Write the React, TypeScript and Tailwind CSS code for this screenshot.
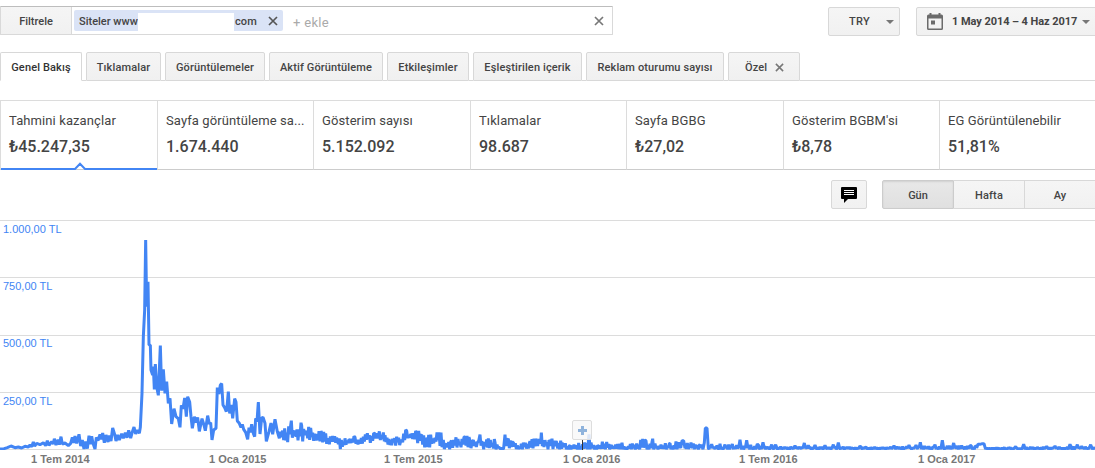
import React from 'react';

const tabs = [
  { label: 'Genel Bakış', width: 'w-[82px]', active: true },
  { label: 'Tıklamalar', width: 'w-[75px]' },
  { label: 'Görüntülemeler', width: 'w-[100px]' },
  { label: 'Aktif Görüntüleme', width: 'w-[114px]' },
  { label: 'Etkileşimler', width: 'w-[82px]' },
  { label: 'Eşleştirilen içerik', width: 'w-[109px]' },
  { label: 'Reklam oturumu sayısı', width: 'w-[138px]' },
];

const metrics = [
  { label: 'Tahmini kazançlar', value: '₺45.247,35', width: 'w-[157px]' },
  { label: 'Sayfa görüntüleme sa...', value: '1.674.440', width: 'w-[156px]' },
  { label: 'Gösterim sayısı', value: '5.152.092', width: 'w-[157px]' },
  { label: 'Tıklamalar', value: '98.687', width: 'w-[156px]' },
  { label: 'Sayfa BGBG', value: '₺27,02', width: 'w-[157px]' },
  { label: "Gösterim BGBM'si", value: '₺8,78', width: 'w-[156px]' },
  { label: 'EG Görüntülenebilir', value: '51,81%', width: 'w-[156px]' },
];

type Pt = [number, number];
type Band = [number, number, number];

// Chart units are thirds of a pixel; the zero line is at 687.
const opening: Pt[] = [
  [0, 687], [12, 686], [22, 683], [33, 678], [45, 683], [55, 681], [65, 684], [75, 679], [85, 681], [90, 675],
  [95, 680], [100, 666], [104, 678], [110, 670], [120, 674], [130, 668], [137, 677], [142, 662], [147, 676],
  [155, 665], [160, 672], [163, 656], [168, 675], [174, 659], [178, 674], [183, 650], [187, 672], [195, 669],
  [205, 677], [212, 670], [217, 652], [221, 669], [225, 648], [230, 670], [237, 643], [242, 678], [247, 660],
  [252, 687], [257, 665], [262, 686], [267, 647], [271, 673], [275, 649], [279, 670], [285, 687], [289, 652],
  [294, 662], [300, 643], [304, 658], [308, 639], [313, 668], [318, 645], [324, 666], [328, 647], [333, 663],
  [338, 624], [344, 643], [348, 663], [353, 645], [358, 660], [365, 641], [370, 655], [376, 638], [381, 653],
  [386, 631], [392, 654], [396, 639], [402, 621], [407, 642], [412, 630], [418, 640], [421, 622],
  [426, 520], [430, 350], [434, 270], [437, 60], [440, 260], [444, 185], [447, 375], [451, 375], [453, 450],
  [458, 465], [460, 440], [463, 508], [466, 432], [470, 500], [475, 526], [481, 377], [485, 512], [490, 448],
  [495, 520], [500, 485], [505, 550], [510, 535], [515, 612], [522, 566], [528, 590], [535, 596], [540, 622],
  [544, 556], [549, 566], [554, 534], [559, 590], [563, 530], [569, 546], [573, 590], [577, 625], [583, 590],
  [588, 608], [593, 592], [598, 634], [606, 596], [611, 612], [616, 632], [623, 587], [628, 612], [632, 608],
  [636, 660], [641, 630], [648, 625], [652, 503], [657, 522], [661, 495], [665, 491], [669, 555], [674, 563],
  [679, 575], [682, 550], [685, 515], [689, 580], [694, 555], [698, 595], [704, 536], [708, 546], [712, 603],
  [718, 610], [723, 622], [727, 613], [731, 628], [737, 637], [743, 658], [747, 623], [751, 637], [755, 613],
  [760, 640], [764, 650], [767, 595], [771, 605], [775, 546], [780, 642], [785, 594], [789, 592], [795, 610],
  [799, 664], [807, 635], [813, 609], [818, 643], [825, 598], [832, 635], [838, 655],
];

const bands: Band[] = [
  [840, 635, 655], [848, 632, 650], [860, 638, 673], [874, 602, 645], [879, 632, 650], [885, 632, 652],
  [905, 617, 652], [920, 634, 652],
  [932, 624, 652], [945, 641, 656], [965, 638, 661], [985, 655, 670], [998, 648, 668], [1012, 658, 668],
  [1024, 660, 687], [1035, 655, 670], [1050, 660, 668], [1065, 652, 668], [1078, 660, 670], [1090, 650, 670],
  [1102, 640, 660], [1115, 648, 663], [1125, 641, 658], [1138, 634, 660], [1155, 646, 665], [1172, 660, 671],
  [1190, 650, 670], [1205, 660, 671], [1220, 632, 655], [1235, 646, 660], [1250, 638, 660], [1265, 644, 666],
  [1280, 658, 680], [1292, 644, 675], [1305, 654, 668], [1317, 637, 668], [1330, 660, 680], [1340, 671, 688],
  [1355, 663, 683], [1368, 652, 679], [1380, 666, 680], [1395, 651, 679], [1410, 662, 680], [1420, 660, 678],
  [1436, 663, 678], [1440, 644, 676], [1445, 667, 681], [1448, 667, 683], [1465, 655, 680], [1485, 667, 684],
  [1500, 685, 687], [1511, 684, 687],
  [1515, 644, 683], [1525, 656, 680], [1540, 667, 680], [1558, 683, 687], [1570, 668, 684], [1590, 664, 680],
  [1610, 661, 678], [1619, 659, 677], [1624, 638, 675], [1629, 661, 679], [1650, 664, 682], [1670, 667, 684],
  [1690, 671, 684], [1710, 676, 687], [1730, 676, 688], [1760, 670, 687], [1767, 643, 682], [1775, 676, 688],
  [1795, 678, 688], [1820, 666, 688], [1835, 676, 688], [1860, 672, 688], [1885, 679, 688], [1910, 671, 687],
  [1938, 662, 685], [1950, 671, 686], [1958, 656, 685], [1965, 671, 687], [1990, 677, 687], [2010, 670, 688],
  [2022, 676, 688], [2036, 667, 688], [2044, 674, 688], [2100, 674, 688], [2180, 677, 688], [2300, 680, 687],
  [2400, 683, 687], [2500, 681, 687], [2600, 683, 687], [2800, 680, 687], [2930, 680, 687], [2965, 684, 687],
  [3100, 683, 687], [3290, 681, 687],
];

const spikes: Pt[] = [
  [2046, 662], [2051, 662], [2073, 668], [2090, 676], [2105, 674], [2113, 668], [2116, 624], [2121, 624],
  [2135, 673], [2150, 678], [2175, 674], [2197, 672], [2220, 659], [2240, 661], [2272, 672], [2289, 667],
  [2315, 674], [2327, 674], [2385, 677], [2413, 669], [2425, 676], [2445, 675], [2475, 676], [2500, 674],
  [2515, 668], [2580, 678], [2682, 677], [2727, 675], [2748, 675], [2761, 667], [2805, 674], [2827, 661],
  [2861, 669], [2885, 677], [2910, 677], [2934, 673], [2940, 673], [2947, 671], [2952, 671], [3047, 680],
  [3071, 673], [3140, 679], [3165, 678], [3210, 673], [3232, 674], [3245, 679], [3272, 674],
];

function noise(x: number): number {
  const n = Math.sin(x * 12.9898) * 43758.5453;
  return n - Math.floor(n);
}

function buildLine(): string {
  const pts: Pt[] = [...opening];
  for (let i = 0; i < bands.length - 1; i++) {
    const [x0, top0, low0] = bands[i];
    const [x1, top1, low1] = bands[i + 1];
    pts.push([x0, top0]);
    for (let x = x0 + 3, k = 1; x < x1 - 1; x += 3, k++) {
      const t = (x - x0) / (x1 - x0);
      const top = top0 + (top1 - top0) * t;
      const low = low0 + (low1 - low0) * t;
      const jitter = noise(x);
      const pull = k % 2 ? 0.7 + jitter * 0.7 : jitter * 1.0 - 0.5;
      pts.push([x, Math.min(688, top + (low - top) * pull)]);
    }
  }
  const spiked = pts.filter(([x]) => !spikes.some(([sx]) => Math.abs(sx - x) < 4));
  for (const [x, y] of spikes) {
    spiked.push([x, y]);
    if (!spikes.some(([sx]) => sx < x && x - sx < 9)) spiked.push([x - 4, Math.min(684, y + 24)]);
    if (!spikes.some(([sx]) => sx > x && sx - x < 9)) spiked.push([x + 4, 685]);
  }
  spiked.sort((a, b) => a[0] - b[0]);
  return spiked.map(([x, y]) => `${x},${y.toFixed(1)}`).join(' ');
}

const line = buildLine();

const yLabels = ['1.000,00 TL', '750,00 TL', '500,00 TL', '250,00 TL'];
const rowStyles = ['h-[57px] pt-px', 'h-[58px] pt-px', 'h-[57px] pt-0', 'h-[57px] pt-px'];

const xLabels = [
  { text: '1 Tem 2014', width: 'w-[178px]' },
  { text: '1 Oca 2015', width: 'w-[175px]' },
  { text: '1 Tem 2015', width: 'w-[179px]' },
  { text: '1 Oca 2016', width: 'w-[176px]' },
  { text: '1 Tem 2016', width: 'w-[179px]' },
  { text: '1 Oca 2017', width: 'w-[177px]' },
];

function Cross({ className }: { className: string }) {
  return (
    <svg viewBox="0 0 10 10" className={`shrink-0 ${className}`} fill="none" stroke="currentColor" strokeWidth="1.7">
      <path d="M1 1 9 9M9 1 1 9" />
    </svg>
  );
}

function Caret({ className = '' }: { className?: string }) {
  return (
    <svg viewBox="0 0 8 4" className={`h-1 w-2 shrink-0 ${className}`} fill="#777">
      <path d="M0 0h8L4 4z" />
    </svg>
  );
}

const button = 'border border-[#d8d8d8] bg-linear-to-b from-[#f5f5f5] to-[#f1f1f1]';

function TopBar() {
  return (
    <div className="flex h-[52px] items-start pt-1.5">
      <div className="flex h-[29px] w-[613px] shrink-0 rounded-[1px] border border-[#d9d9d9] border-t-[#bdbdbd]">
        <div className="flex w-[71px] items-center justify-center border-r border-[#d9d9d9] bg-linear-to-b from-[#f5f5f5] to-[#f1f1f1] pt-[3px] text-[11px] font-medium">
          Filtrele
        </div>
        <div className="ml-[2px] mt-[3px] flex h-[21px] w-[209px] items-center rounded-[2px] bg-[#dae3f6] pl-[5px] text-[11px] font-medium">
          <span className="w-[59px] whitespace-nowrap pt-[3px]">Siteler www</span>
          <span className="mt-[3px] h-[18px] w-24 bg-white" />
          <span className="ml-px w-[33px] pt-[3px] tracking-[0.1px]">com</span>
          <Cross className="h-[10px] w-[10px] text-[#555]" />
        </div>
        <span className="ml-2.5 mt-[7px] grow text-[13px] leading-[18px] tracking-[0.3px] text-[#aaa]">+ ekle</span>
        <Cross className="mr-[8px] mt-[9px] h-[10px] w-[10px] text-[#777]" />
      </div>
      <div className={`ml-[215px] mt-px flex h-[29px] w-[72px] shrink-0 items-center justify-end rounded-[2px] pr-[5px] text-[11px] font-medium ${button}`}>
        <span className="pt-0.5 tracking-[0.3px]">TRY</span>
        <Caret className="ml-4" />
      </div>
      <div className={`ml-4 mt-px flex h-[29px] w-[186px] shrink-0 items-center rounded-[2px] pl-[10px] text-[11px] font-bold ${button}`}>
        <svg viewBox="0 0 16 17" className="h-[17px] w-4 shrink-0" fill="#6b6b6b">
          <path fillRule="evenodd" d="M2.5 0h2v1.5h7V0h2v1.5h1A1.5 1.5 0 0 1 16 3v12.5a1.5 1.5 0 0 1-1.5 1.5h-13A1.5 1.5 0 0 1 0 15.500V3a1.500 1.500 0 0 1 1.500-1.500h1zM1.500 5.500v10h13v-10zM4 7.500h4v4H4z" />
        </svg>
        <span className="ml-[9px] w-[126px] whitespace-nowrap pt-0.5 tracking-[-0.06px]">1 May 2014 – 4 Haz 2017</span>
        <Caret className="ml-1" />
      </div>
    </div>
  );
}

function Tabs() {
  return (
    <div className="flex h-[29px] shrink-0 text-[11px] font-medium">
      {tabs.map((tab) => (
        <React.Fragment key={tab.label}>
          <div
            className={`flex shrink-0 items-center justify-center whitespace-nowrap rounded-t-[2px] border border-[#d8d8d8] pt-[3px] tracking-[0.13px] ${tab.width} ${
              tab.active ? 'border-b-white bg-white text-[#333]' : 'bg-linear-to-b from-[#f5f5f5] to-[#f0f0f0]'
            }`}
          >
            {tab.label}
          </div>
          <div className="w-1 shrink-0 border-b border-[#d8d8d8]" />
        </React.Fragment>
      ))}
      <div className="flex w-[72px] shrink-0 items-center rounded-t-[2px] border border-[#d8d8d8] bg-linear-to-b from-[#f5f5f5] to-[#f0f0f0] pl-4 pt-[3px] tracking-[0.13px]">
        Özel
        <Cross className="-mt-px ml-2 h-[9px] w-[9px] text-[#777]" />
      </div>
      <div className="grow border-b border-[#d8d8d8]" />
    </div>
  );
}

function Metrics() {
  return (
    <div className="mt-[19px] flex h-[70px] shrink-0 border-t border-[#dcdcdc]">
      {metrics.map((m, i) => (
        <div
          key={m.label}
          className={`relative shrink-0 border-b border-l border-[#dcdcdc] border-b-[#ccc] pl-2 pt-[11px] ${m.width}`}
        >
          <div className="whitespace-nowrap text-[13px] leading-[18px] tracking-[0.1px]">{m.label}</div>
          <div className="mt-[7px] text-[16px] font-medium leading-[20px]">{m.value}</div>
          {i === 0 && (
            <svg viewBox="0 0 156 8" className="absolute -bottom-px left-0 h-2 w-[156px]">
              <path d="M0 7h74l5-5.300L84 7h72" fill="white" stroke="#4285f4" strokeWidth="2" />
            </svg>
          )}
        </div>
      ))}
    </div>
  );
}

function ChartControls() {
  return (
    <div className="flex h-[50px] shrink-0 justify-end pt-[10px] text-[11px] font-medium">
      <div className={`flex h-[29px] w-9 items-center justify-center rounded-[2px] ${button}`}>
        <svg viewBox="0 0 16 16" className="mt-px h-4 w-4">
          <path d="M1 0h14a1 1 0 0 1 1 1v10a1 1 0 0 1-1 1H7l-4 4v-4H1a1 1 0 0 1-1-1V1a1 1 0 0 1 1-1z" fill="black" />
          <path d="M3 3.500h10M3 5.500h10M3 7.500h10" stroke="white" />
        </svg>
      </div>
      <div className="ml-[15px] flex h-[29px] w-[213px]">
        <div className="flex w-[72px] items-center justify-center rounded-l-[2px] border border-[#ccc] bg-linear-to-b from-[#e8e8e8] to-[#e0e0e0] pt-[3px] shadow-[inset_0_1px_2px_rgba(0,0,0,0.1)]">
          Gün
        </div>
        <div className={`flex w-[71px] items-center justify-center border-l-0 pt-[3px] tracking-[0.15px] ${button}`}>Hafta</div>
        <div className={`flex w-[70px] items-center justify-center border-x-0 pt-[3px] ${button}`}>Ay</div>
      </div>
    </div>
  );
}

function Chart() {
  return (
    <div className="relative h-[248px] shrink-0 overflow-hidden font-['Liberation_Sans',Arial,sans-serif] text-[11px]">
      {yLabels.map((label, i) => (
        <div key={label} className={`border-t border-[#dcdcdc] pl-[3px] leading-[14px] text-[#4285f4] ${rowStyles[i]}`}>
          {label}
        </div>
      ))}
      <div className="border-t border-[#dcdcdc]" />
      <div className="flex pl-[31px] pt-[2px] font-bold leading-[14px] text-[#777]">
        {xLabels.map((l) => (
          <span key={l.text} className={`shrink-0 whitespace-nowrap ${l.width}`}>
            {l.text}
          </span>
        ))}
      </div>
      <svg viewBox="0 0 3285 690" className="absolute left-0 top-0 h-[230px] w-[1095px] overflow-hidden">
        <polyline points={line} fill="none" stroke="#4285f4" strokeWidth="9" strokeLinejoin="bevel" />
      </svg>
      <div className="absolute left-[582px] top-[220px] h-[10px] w-px bg-[#333]" />
      <div className="absolute left-[572px] top-[200px] flex h-5 w-5 items-center justify-center rounded-[2px] border border-[#ddd] bg-[#f8f8f8]/85">
        <svg viewBox="0 0 9 9" className="ml-px mt-px h-[9px] w-[9px]" fill="#8fb3dc">
          <path d="M3 0h3v3h3v3H6v3H3V6H0V3h3z" />
        </svg>
      </div>
    </div>
  );
}

export default function App() {
  return (
    <div className="flex h-[468px] w-[1095px] flex-col overflow-hidden bg-white font-[Roboto,sans-serif] text-[#444]">
      <TopBar />
      <Tabs />
      <Metrics />
      <ChartControls />
      <Chart />
    </div>
  );
}
